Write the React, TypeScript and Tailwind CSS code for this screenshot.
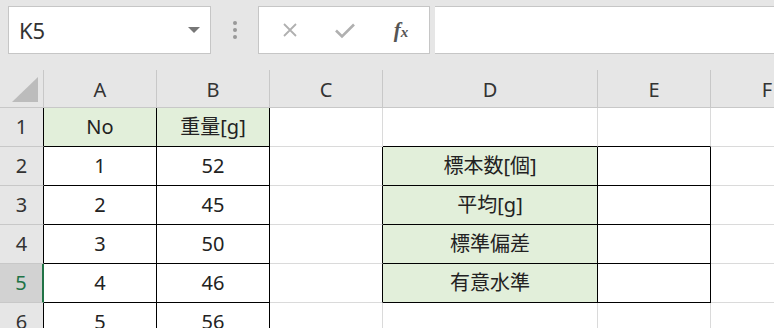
import React from "react";

type CellProps = {
  children?: React.ReactNode;
  r?: "g" | "k";
  b?: "g" | "k";
  fill?: boolean;
};

function Cell({ children, r = "g", b = "g", fill }: CellProps) {
  const rc = r === "k" ? "border-r-black" : "border-r-[#dadada]";
  const bc = b === "k" ? "border-b-black" : "border-b-[#dadada]";
  return (
    <div
      className={`flex items-center justify-center border-r border-b ${rc} ${bc} ${
        fill ? "bg-[#e2efda]" : "bg-white"
      } text-[20px] text-[#222]`}
    >
      {children}
    </div>
  );
}

function ColHead({ children }: { children: React.ReactNode }) {
  return (
    <div className="flex items-center justify-center border-b border-b-[#c8c8c8] border-r border-r-[#c8c8c8] bg-[#e6e6e6] text-[20px] text-[#333] pt-[2px]">
      {children}
    </div>
  );
}

function RowHead({ n, sel }: { n: number; sel?: boolean }) {
  return (
    <div
      className={`flex items-center justify-center border-b border-b-[#c8c8c8] ${
        sel
          ? "bg-[#d2d2d2] text-[#217346] border-r-2 border-r-[#217346]"
          : "bg-[#e6e6e6] text-[#333] border-r border-r-black"
      } text-[20px]`}
    >
      {n}
    </div>
  );
}

export default function App() {
  const rows: { a?: string; b?: string; d?: string }[] = [
    { a: "No", b: "重量[g]" },
    { a: "1", b: "52", d: "標本数[個]" },
    { a: "2", b: "45", d: "平均[g]" },
    { a: "3", b: "50", d: "標準偏差" },
    { a: "4", b: "46", d: "有意水準" },
    { a: "5", b: "56" },
  ];
  return (
    <div
      className="w-[774px] h-[328px] overflow-hidden bg-[#e6e6e6] flex flex-col"
      style={{ fontFamily: '"Noto Sans", "Noto Sans CJK JP", sans-serif' }}
    >
      {/* formula bar */}
      <div className="h-[70px] flex items-start pt-[6px] pl-[8px] shrink-0">
        <div className="w-[203px] h-[48px] bg-white border border-[#c6c6c6] flex items-center pl-[10px] pr-[10px]">
          <span className="text-[22px] text-[#333] flex-1">K5</span>
          <svg width="12" height="7" viewBox="0 0 12 7">
            <path d="M0 0 L12 0 L6 6 Z" fill="#777" />
          </svg>
        </div>
        <div className="w-[47px] h-[48px] flex flex-col items-center justify-center gap-[3px]">
          <span className="w-[4px] h-[4px] rounded-full bg-[#999]" />
          <span className="w-[4px] h-[4px] rounded-full bg-[#999]" />
          <span className="w-[4px] h-[4px] rounded-full bg-[#999]" />
        </div>
        <div className="w-[172px] h-[48px] bg-white border border-[#c6c6c6] flex items-center">
          <div className="w-[58px] flex justify-center pl-[4px]">
            <svg width="16" height="16" viewBox="0 0 16 16">
              <path d="M2 2 L14 14 M14 2 L2 14" stroke="#b0b0b0" strokeWidth="1.8" />
            </svg>
          </div>
          <div className="w-[56px] flex justify-center">
            <svg width="22" height="17" viewBox="0 0 22 17">
              <path d="M2 8.5 L8 14.5 L20 2.5" stroke="#b0b0b0" strokeWidth="2.6" fill="none" />
            </svg>
          </div>
          <div className="w-[56px] flex justify-center">
            <span
              className="text-[21px] italic font-bold text-[#555] leading-none"
              style={{ fontFamily: '"Liberation Serif", serif' }}
            >
              f<span className="text-[15px]">x</span>
            </span>
          </div>
        </div>
        <div className="ml-[5px] flex-1 h-[48px] bg-white border-y border-[#c6c6c6]" />
      </div>

      {/* sheet */}
      <div className="grid grid-cols-[44px_113px_113px_113px_215px_113px_113px] grid-rows-[38px_39px_39px_39px_39px_39px_39px] bg-white">
        <div className="bg-[#e6e6e6] border-r border-b border-[#c8c8c8] flex items-end justify-end pr-[5px] pb-[5px]">
          <svg width="26" height="25" viewBox="0 0 26 25">
            <path d="M26 0 L26 25 L0 25 Z" fill="#bcbcbc" />
          </svg>
        </div>
        <ColHead>A</ColHead>
        <ColHead>B</ColHead>
        <ColHead>C</ColHead>
        <ColHead>D</ColHead>
        <ColHead>E</ColHead>
        <ColHead>F</ColHead>

        {rows.map((row, i) => {
          const n = i + 1;
          const inDE = n >= 2 && n <= 5;
          const topDE = n >= 1 && n <= 5;
          return (
            <React.Fragment key={n}>
              <RowHead n={n} sel={n === 5} />
              <Cell r="k" b={n === 6 ? "g" : "k"} fill={n === 1}>
                {row.a}
              </Cell>
              <Cell r="k" b={n === 6 ? "g" : "k"} fill={n === 1}>
                {row.b}
              </Cell>
              <Cell r={inDE ? "k" : "g"} b="g" />
              <Cell r={inDE ? "k" : "g"} b={topDE ? "k" : "g"} fill={inDE}>
                {row.d}
              </Cell>
              <Cell r={inDE ? "k" : "g"} b={topDE ? "k" : "g"} />
              <Cell r="g" b="g" />
            </React.Fragment>
          );
        })}
      </div>
    </div>
  );
}
